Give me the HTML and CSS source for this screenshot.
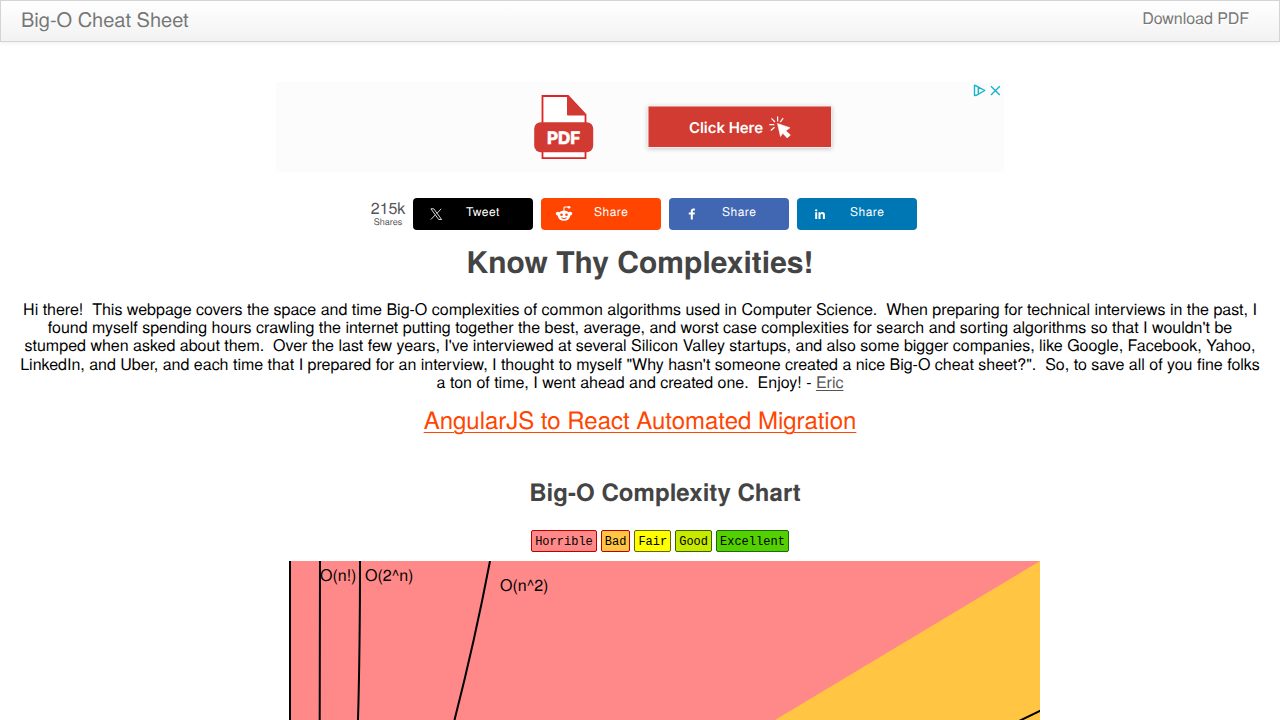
FILE: index.html
```html
<!DOCTYPE html>
<html lang="en">
<head>
<meta charset="utf-8">
<title>Big-O Cheat Sheet</title>
<link rel="stylesheet" href="styles.css">
</head>
<body>
<header class="navbar"><a class="brand">Big-O Cheat Sheet</a><a class="download">Download PDF</a></header>
<section class="ad">
  <svg class="ad-art" width="728" height="90" viewBox="276 82 728 90">
    <defs><filter id="shade" x="-10%" y="-30%" width="120%" height="160%"><feDropShadow dx="0" dy="1" stdDeviation="2" flood-color="#000" flood-opacity=".22"/></filter></defs>
    <path d="M542.5 96H568l17.500 18.500V158.200H542.500Z" fill="#fff" stroke="#df2424" stroke-width="1.800"/>
    <path d="M567.500 96.200l18.300 18.800H567.500Z" fill="#d13a32" stroke="#d13a32"/>
    <rect x="534.200" y="122.200" width="59" height="30" rx="6.500" fill="#d13a32"/>
    <text x="563.700" y="144.200" class="pdf-label">PDF</text>
    <rect x="648" y="106" width="183.500" height="41.500" fill="#d13a32" stroke="#f7e9e8" stroke-width="1" filter="url(#shade)"/>
    <text x="689" y="132.600" class="cta-label" textLength="74">Click Here</text>
    <path d="M777.500 123.500l12.500 4.300-4.200 3 4.600 4.200-3.200 2.900-4.400-4.600-2.300 3.200Z" fill="#fff" stroke="#fff" stroke-width=".6" stroke-linejoin="round"/>
    <path d="M777.600 116.500v5M783.200 118.200l-3 3.900M771.500 118.300l3.500 3.700M769.300 124.700h5M774.500 127.300l-3.700 3.200" fill="none" stroke="#fff" stroke-width="1.200"/>
    <path d="M974.500 85.200v10.400l1.700-.3 8.600-4.800-8.600-4.700ZM978.300 87.600v6" fill="none" stroke="#17b4cb" stroke-width="1.400" stroke-linejoin="round"/>
    <path d="M991 86.200l8.800 8.800M999.800 86.200l-8.800 8.800" stroke="#17b4cb" stroke-width="1.400"/>
  </svg>
</section>
<section class="shares">
  <div class="count"><b>215k</b><small>Shares</small></div>
  <a class="share x"><svg width="32" height="32" viewBox="0 0 32 32"><path d="M17.900 10.800h2.900l7.800 10.700h-2.900ZM28.200 10.800l-4.500 4.900M22.400 16.800L17.900 21.500" fill="none" stroke="#eee" stroke-width=".9"/></svg><span>Tweet</span></a>
  <a class="share reddit"><svg width="32" height="32" viewBox="0 0 32 32"><ellipse cx="23" cy="17.600" rx="6.300" ry="5.200" fill="#fff"/><circle cx="16.700" cy="15.600" r="1.900" fill="#fff"/><circle cx="29.300" cy="15.600" r="1.900" fill="#fff"/><circle cx="28" cy="9.300" r="1.400" fill="#fff"/><path d="M23 13V9h4" fill="none" stroke="#fff"/><circle cx="20.500" cy="16.700" r="1.300" fill="#ff4500"/><circle cx="25.500" cy="16.700" r="1.300" fill="#ff4500"/><path d="M20.300 19.800q2.700 1.600 5.400 0" fill="none" stroke="#ff4500"/></svg><span>Share</span></a>
  <a class="share facebook"><svg width="32" height="32" viewBox="0 0 32 32"><path d="M21.800 21.600v-5h-2v-2.100h2V13q0-2.600 2.700-2.600h1.400v2h-1q-1.100 0-1.100 1v1.100h2.100l-.3 2.100h-1.800v5Z" fill="#fff"/></svg><span>Share</span></a>
  <a class="share linkedin"><svg width="32" height="32" viewBox="0 0 32 32"><circle cx="19.200" cy="12.300" r="1.150" fill="#fff"/><path d="M18.200 14.200h2V21h-2ZM21.500 14.200h1.900v.9q.7-1.100 2.100-1.100 2.400 0 2.400 2.800V21h-2v-3.800q0-1.500-1.100-1.500-1.300 0-1.300 1.500V21h-2Z" fill="#fff"/></svg><span>Share</span></a>
</section>
<main>
  <h1>Know Thy Complexities!</h1>
  <p class="intro">Hi there!&nbsp; This webpage covers the space and time Big-O complexities of common algorithms used in Computer Science.&nbsp; When preparing for technical interviews in the past, I<br>found myself spending hours crawling the internet putting together the best, average, and worst case complexities for search and sorting algorithms so that I wouldn't be<br>stumped when asked about them.&nbsp; Over the last few years, I've interviewed at several Silicon Valley startups, and also some bigger companies, like Google, Facebook, Yahoo,<br>LinkedIn, and Uber, and each time that I prepared for an interview, I thought to myself "Why hasn't someone created a nice Big-O cheat sheet?".&nbsp; So, to save all of you fine folks<br>a ton of time, I went ahead and created one.&nbsp; Enjoy! - <a class="author">Eric</a></p>
  <p class="promo"><a>AngularJS to React Automated Migration</a></p>
  <h2>Big-O Complexity Chart</h2>
  <div class="legend"><span class="horrible">Horrible</span><span class="bad">Bad</span><span class="fair">Fair</span><span class="good">Good</span><span class="excellent">Excellent</span></div>
  <svg class="chart" width="751" height="159" viewBox="289 561 751 159">
    <path d="M289 561h751v159H289Z" fill="#ff8989"/>
    <path d="M1040 561V720H775Z" fill="#ffc543"/>
    <path d="M290 561V720M320 561Q320 660 319.700 720M360 561Q360 650 358 720M490 561Q475 640 454.500 720M1018 721.500L1041 710.500" fill="none" stroke="#000" stroke-width="2"/>
    <text x="320" y="581">O(n!)</text><text x="365" y="581">O(2^n)</text><text x="500" y="591">O(n^2)</text>
  </svg>
</main>
</body>
</html>
```
FILE: styles.css
```css
* { box-sizing: border-box; }
body { margin: 0; height: 720px; overflow: hidden; background: #fff; color: #000; font: 16px/18.3px "TeX Gyre Heros", "Nimbus Sans", "Liberation Sans", sans-serif; text-rendering: geometricPrecision; }
.navbar { display: flex; justify-content: space-between; height: 42px; padding: 0 30px 0 20px; border: 1px solid #d4d4d4; background: linear-gradient(#fff, #f2f2f2); box-shadow: 0 1px 4px rgba(0,0,0,.07); color: #777; text-shadow: 0 1px 0 #fff; }
.brand { font-size: 20px; line-height: 36px; }
.download { line-height: 33px; letter-spacing: -.05px; }
.ad { width: 728px; height: 90px; margin: 40px auto 0; background: #fcfcfc; }
.ad-art { display: block; }
.pdf-label { font: 700 17px Inter, sans-serif; fill: #fff; stroke: #fff; stroke-width: .7px; text-anchor: middle; }
.cta-label { font: 600 15px Inter, sans-serif; fill: #fff; }
.shares { display: flex; gap: 8px; height: 32px; margin: 26px 0 0 370px; }
.count { width: 35px; padding-left: 1px; display: flex; flex-direction: column; align-items: center; color: #555; }
.count b { font-weight: 400; font-size: 16px; line-height: 20px; letter-spacing: -.1px; }
.count small { font-size: 9px; line-height: 8px; }
.share { display: flex; width: 120px; height: 32px; border-radius: 4px; color: #fff; font-size: 12px; letter-spacing: .5px; line-height: 28px; }
.share span { flex: 1; padding-left: 21px; }
.x { background: #000; }
.reddit { background: #ff4500; }
.facebook { background: #4267b2; }
.linkedin { background: #0077b5; }
h1 { margin: 12px 0 0; font-size: 30px; line-height: 40px; text-align: center; color: #444; }
.intro { margin: 17.8px 0 0; line-height: 18.25px; text-align: center; white-space: nowrap; letter-spacing: -.005px; }
.author { color: #555; text-decoration: underline 1px; text-underline-offset: 2px; }
.promo { margin: 12.45px 0 0; text-align: center; font-size: 24px; line-height: 32px; color: #ff4500; }
.promo a { text-decoration: underline 1px; text-underline-offset: 3px; letter-spacing: -.02px; }
h2 { margin: 41px 0 0 50px; font-size: 24px; line-height: 32px; text-align: center; letter-spacing: .04px; color: #444; }
.legend { display: flex; justify-content: center; gap: 4px; margin: 22px 0 0 40px; font: 12px/22px "Liberation Mono", monospace; text-rendering: auto; }
.legend span { padding: 0 3px; border: 1px solid; border-radius: 2px; height: 22px; }
.legend .horrible { background: #ff8989; border-color: #b00; }
.legend .bad { background: #ffc543; border-color: #b00; }
.legend .fair { background: #ff0; border-color: #660; }
.legend .good { background: #c8ea00; border-color: #360; }
.legend .excellent { background: #53d000; border-color: #261; }
.horrible, .bad, .fair, .good, .excellent { color: #000; }
.chart { display: block; margin: 9px 0 0 289px; }
```
